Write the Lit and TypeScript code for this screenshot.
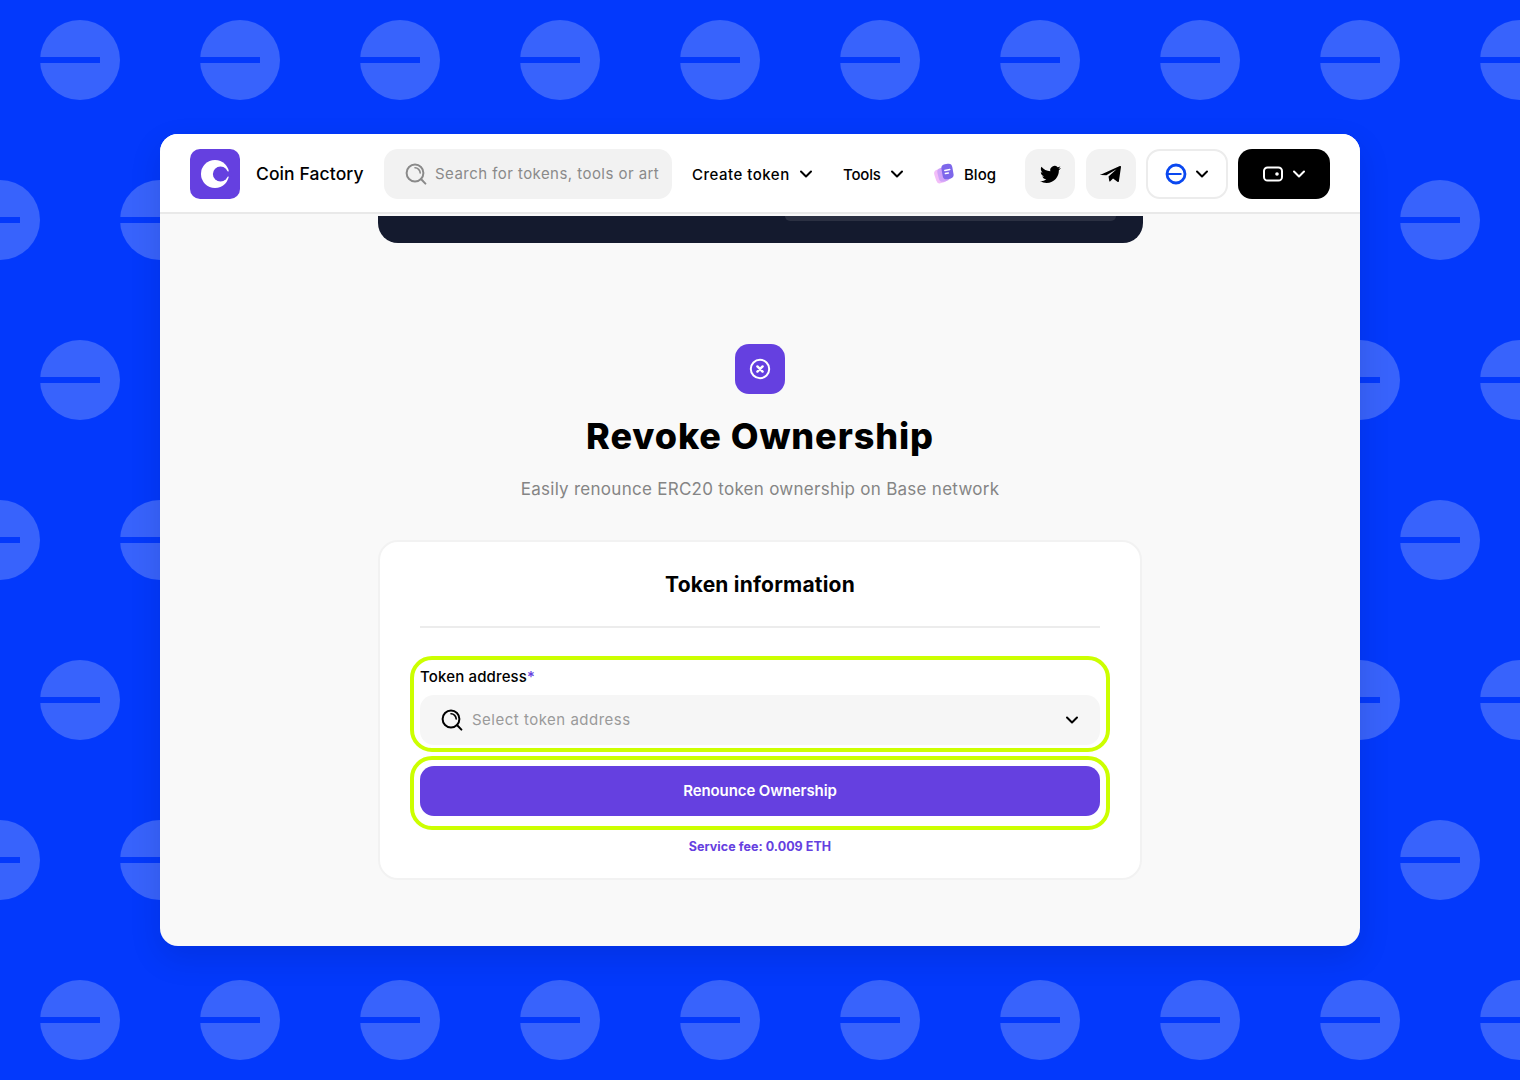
import { LitElement, html, css } from "lit";
import { customElement } from "lit/decorators.js";

const chevron = (stroke = "#000", w = 14) => html`<svg class="chev" width=${w} height=${w} viewBox="0 0 14 14" fill="none"><path d="M2 4.5 7 9.5 12 4.5" stroke=${stroke} stroke-width="2" stroke-linecap="round" stroke-linejoin="round"/></svg>`;
const lens = (stroke: string, size: number) => html`<svg width=${size} height=${size} viewBox="0 0 22 22" fill="none"><circle cx="10" cy="10" r="8.4" stroke=${stroke} stroke-width="2"/><path d="M10 4.8a5.2 5.2 0 0 1 5.2 5.2" stroke=${stroke} stroke-width="1.6" stroke-linecap="round"/><path d="M16.2 16.2 20.4 20.6" stroke=${stroke} stroke-width="2" stroke-linecap="round"/></svg>`;

@customElement("app-root")
export class AppRoot extends LitElement {
  static styles = css`
    :host { display: block; position: relative; width: 1520px; height: 1080px; overflow: hidden; background: #0339fc; font-family: Inter, "Liberation Sans", sans-serif; color: #000; }
    .pattern { position: absolute; inset: 0; }
    .stage { position: relative; display: flex; justify-content: center; padding-top: 134px; }
    .window { width: 1200px; height: 812px; background: #f9f9f9; border-radius: 18px; overflow: hidden; box-shadow: 0 12px 32px rgba(0,0,40,.12); }
    header { box-sizing: border-box; height: 80px; padding: 2px 30px 0; background: #fff; border-bottom: 2px solid #e9e9e9; display: flex; align-items: center; }
    .logo { width: 50px; height: 50px; flex: none; }
    .brand { margin-left: 16px; padding-bottom: 2px; font-size: 17.5px; font-weight: 500; width: 128px; white-space: nowrap; letter-spacing: .1px; }
    .search { box-sizing: border-box; width: 288px; height: 50px; background: #f2f2f2; border-radius: 14px; display: flex; align-items: center; gap: 8px; padding-left: 21px; color: #8a8a8a; font-size: 15px; white-space: nowrap; letter-spacing: .45px; }
    .search span { padding-bottom: 1px; }
    .nav { display: flex; align-items: center; font-size: 15px; font-weight: 500; white-space: nowrap; }
    .create { margin-left: 20px; gap: 9px; width: 151px; letter-spacing: .5px; }
    .tools { gap: 9px; width: 90px; letter-spacing: -.2px; }
    .blog { gap: 10px; width: 92px; }
    .sq { box-sizing: border-box; width: 50px; height: 50px; background: #f2f2f2; border-radius: 14px; display: flex; align-items: center; justify-content: center; flex: none; }
    .sq + .sq { margin-left: 11px; }
    .chain { box-sizing: border-box; width: 82px; height: 50px; margin-left: 10px; border: 2px solid #ececec; border-radius: 14px; display: flex; align-items: center; justify-content: center; gap: 8px; }
    .wallet { box-sizing: border-box; width: 92px; height: 50px; margin-left: 10px; background: #000; border-radius: 14px; display: flex; align-items: center; justify-content: center; gap: 8px; }
    main { display: flex; flex-direction: column; align-items: center; }
    .dark { box-sizing: border-box; width: 765px; height: 27px; margin-top: 2px; background: #141a2e; border-radius: 0 0 20px 20px; display: flex; justify-content: flex-end; padding-right: 27px; }
    .dark i { display: block; width: 331px; height: 5px; background: #2b3042; border-radius: 0 0 10px 10px; }
    .badge { width: 50px; height: 50px; margin-top: 101px; background: #6540e0; border-radius: 14px; display: flex; align-items: center; justify-content: center; }
    h1 { margin: 17px 0 0; font-size: 36px; line-height: 50px; font-weight: 800; letter-spacing: .9px; }
    .sub { margin: 17px 0 0; font-size: 17px; line-height: 22px; color: #858585; letter-spacing: .27px; }
    .card { box-sizing: border-box; width: 764px; height: 340px; margin-top: 40px; background: #fff; border: 2px solid #f2f2f2; border-radius: 20px; padding: 0 30px; display: flex; flex-direction: column; align-items: stretch; }
    h2 { margin: 0 10px; padding: 29px 0 27px; text-align: center; font-size: 21px; line-height: 28px; font-weight: 700; letter-spacing: .2px; border-bottom: 2px solid #ececec; }
    .hl { box-sizing: border-box; border: 4px solid #ccff00; border-radius: 22px; padding: 0 6px; }
    .hl.one { height: 96px; margin-top: 28px; }
    .hl.two { height: 74px; margin-top: 4px; padding-top: 6px; }
    label { display: block; font-size: 15px; line-height: 20px; font-weight: 500; margin-top: 6px; letter-spacing: .15px; padding-top: 1px; }
    label b { color: #6540e0; font-weight: 500; }
    .select { box-sizing: border-box; height: 50px; margin-top: 8px; background: #f6f6f6; border-radius: 14px; display: flex; align-items: center; padding: 0 21px; gap: 9px; color: #9a9a9a; font-size: 15px; letter-spacing: .5px; }
    .select span { flex: 1; padding-bottom: 1px; }
    button { display: block; width: 100%; height: 50px; border: 0; border-radius: 14px; background: #6540e0; color: #fff; font: 600 15px Inter, "Liberation Sans", sans-serif; letter-spacing: -.1px; padding: 0 0 2px; }
    .fee { margin: 8px 0 0; text-align: center; font-size: 12.5px; line-height: 18px; font-weight: 700; color: #6540e0; letter-spacing: .05px; }
  `;

  render() {
    return html`
      <svg class="pattern" width="1520" height="1080" aria-hidden="true">
        <defs>
          <g id="coin"><circle r="40" fill="#3863fc"/><rect x="-40" y="-3" width="60" height="6" fill="#0339fc"/></g>
          <pattern id="tile" width="160" height="320" patternUnits="userSpaceOnUse">
            <use href="#coin" x="80" y="60"/>
            <use href="#coin" x="0" y="220"/>
            <use href="#coin" x="160" y="220"/>
          </pattern>
        </defs>
        <rect width="1520" height="1080" fill="url(#tile)"/>
      </svg>
      <div class="stage">
        <div class="window">
          <header>
            <svg class="logo" viewBox="0 0 50 50"><rect width="50" height="50" rx="10" fill="#6540e0"/><circle cx="25" cy="25" r="14" fill="#fff"/><circle cx="30.5" cy="25" r="7.6" fill="#6540e0"/><rect x="35" y="22.4" width="7" height="5.2" fill="#6540e0"/></svg>
            <div class="brand">Coin Factory</div>
            <div class="search">${lens("#8a8a8a", 22)}<span>Search for tokens, tools or art</span></div>
            <div class="nav create"><span>Create token</span>${chevron()}</div>
            <div class="nav tools"><span>Tools</span>${chevron()}</div>
            <div class="nav blog">
              <svg width="21" height="22" viewBox="0 0 21 22"><rect x="2" y="6" width="11" height="14" rx="4" fill="#f2bdf8" transform="rotate(-18 7.5 13)"/><rect x="5" y="4.5" width="11" height="14" rx="4" fill="#cfa2f8" transform="rotate(-14 10.5 11.5)"/><rect x="9" y="1" width="11" height="15" rx="4" fill="#7d67ea" transform="rotate(-10 14.5 8.5)"/><path d="M11.8 7.4l5-.9M12.4 10.6l3-.5" stroke="#fff" stroke-width="1.5" stroke-linecap="round"/></svg>
              <span>Blog</span>
            </div>
            <div class="sq"><svg width="21" height="21" viewBox="0 0 24 24"><path fill="#000" d="M23.953 4.57a10 10 0 01-2.825.775 4.958 4.958 0 002.163-2.723c-.951.555-2.005.959-3.127 1.184a4.92 4.92 0 00-8.384 4.482C7.69 8.095 4.067 6.13 1.64 3.162a4.822 4.822 0 00-.666 2.475c0 1.71.87 3.213 2.188 4.096a4.904 4.904 0 01-2.228-.616v.06a4.923 4.923 0 003.946 4.827 4.996 4.996 0 01-2.212.085 4.936 4.936 0 004.604 3.417 9.867 9.867 0 01-6.102 2.105c-.39 0-.779-.023-1.17-.067a13.995 13.995 0 007.557 2.209c9.053 0 13.998-7.496 13.998-13.985 0-.21 0-.42-.015-.63A9.935 9.935 0 0024 4.59z"/></svg></div>
            <div class="sq"><svg width="22" height="22" viewBox="0 0 24 24"><path fill="#000" d="M1.2 12.6 21.6 3.4c.8-.3 1.4.2 1.3 1l-2.3 15.4c-.1.9-1 1.2-1.6.7l-4.8-3.6-3 3c-.5.4-1 .2-1.1-.4l-.8-4.9 8.7-7.7-11 6.5-5.6-.4c-1 0-1.1-1.1-.2-1.4Z"/></svg></div>
            <div class="chain">
              <svg width="22" height="22" viewBox="0 0 22 22" fill="none"><circle cx="11" cy="11" r="9" stroke="#0a48f0" stroke-width="2.8"/><path d="M2 11h14.5" stroke="#0a48f0" stroke-width="1.8"/></svg>
              ${chevron()}
            </div>
            <div class="wallet">
              <svg width="22" height="18" viewBox="0 0 22 18" fill="none"><rect x="2" y="2.5" width="18" height="13" rx="3.6" stroke="#fff" stroke-width="2"/><circle cx="15" cy="9" r="1.8" fill="#fff"/></svg>
              ${chevron("#fff")}
            </div>
          </header>
          <main>
            <div class="dark"><i></i></div>
            <div class="badge"><svg width="22" height="22" viewBox="0 0 22 22" fill="none"><circle cx="11" cy="11" r="9.2" stroke="#fff" stroke-width="2"/><path d="M8.4 8.4l5.2 5.2M13.6 8.4l-5.2 5.2" stroke="#fff" stroke-width="2.4" stroke-linecap="round"/></svg></div>
            <h1>Revoke Ownership</h1>
            <p class="sub">Easily renounce ERC20 token ownership on Base network</p>
            <section class="card">
              <h2>Token information</h2>
              <div class="hl one">
                <label>Token address<b>*</b></label>
                <div class="select">${lens("#000", 22)}<span>Select token address</span>${chevron()}</div>
              </div>
              <div class="hl two"><button>Renounce Ownership</button></div>
              <p class="fee">Service fee: 0.009 ETH</p>
            </section>
          </main>
        </div>
      </div>
    `;
  }
}
